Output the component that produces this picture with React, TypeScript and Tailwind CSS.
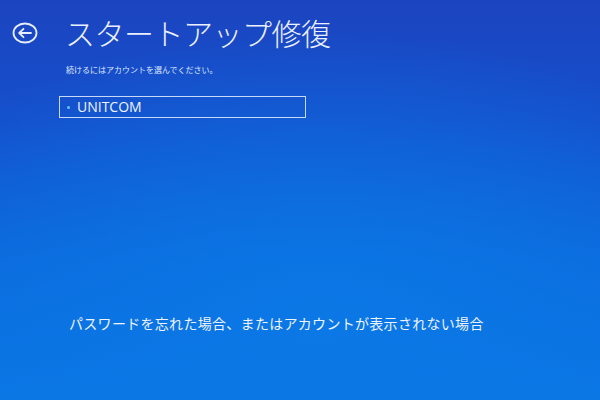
import React from "react";

export default function App() {
  return (
    <div
      className="w-[600px] h-[400px] overflow-hidden text-white flex flex-col"
      style={{
        fontFamily: '"Noto Sans CJK JP", "Noto Sans", sans-serif',
        background:
          "radial-gradient(ellipse 500px 300px at 320px 330px, #0b78e6 0%, rgba(11,120,230,0) 100%), linear-gradient(180deg, #1c44c0 0%, #1550cc 30%, #0c68dc 65%, #0a76e4 100%)",
      }}
    >
      <div className="flex items-center pt-[14px] pl-[12px]">
        <svg width="26" height="22" viewBox="0 0 26 22" className="mt-[2px]">
          <ellipse cx="13" cy="11" rx="11.5" ry="9.5" fill="none" stroke="#e6eeff" strokeWidth="1.8" />
          <path d="M19 11 H7.5 M11.5 6.8 L7.2 11 L11.5 15.2" fill="none" stroke="#e6eeff" strokeWidth="1.8" strokeLinecap="round" strokeLinejoin="round" />
        </svg>
        <div className="ml-[27px] text-[30px] leading-[36px] font-light tracking-[-0.5px] text-[#eaf0ff]">
          スタートアップ修復
        </div>
      </div>
      <div className="pl-[66px] mt-[15px] text-[8px] leading-[10px] text-[#dde6ff]">
        続けるにはアカウントを選んでください。
      </div>
      <div className="ml-[59px] mt-[21px] w-[247px] h-[22px] border-[1.5px] border-[#c8d8f8] flex items-center pl-[7px]">
        <div className="w-[3px] h-[3px] rounded-full bg-[#5cc8ff]" />
        <div
          className="ml-[7px] text-[14px] leading-[16px] text-[#f0f4ff]"
          style={{ fontFamily: '"Open Sans", "Noto Sans", sans-serif' }}
        >
          UNITCOM
        </div>
      </div>
      <div className="pl-[69px] mt-[197px] text-[14px] leading-[16px] text-[#eef3ff] tracking-[0.3px]">
        パスワードを忘れた場合、またはアカウントが表示されない場合
      </div>
    </div>
  );
}
